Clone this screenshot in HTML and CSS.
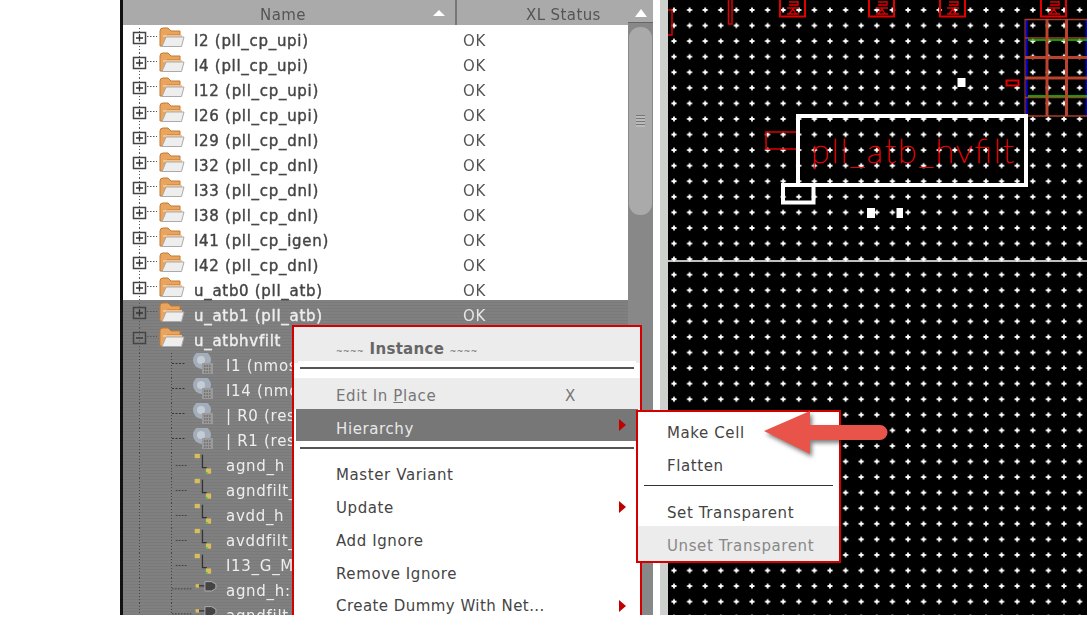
FILE: index.html
```html
<!DOCTYPE html>
<html lang="en">
<head>
    <meta charset="UTF-8">
    <title>Navigator - Make Cell</title>
    <link rel="stylesheet" href="styles.css">
</head>
<body>

<!-- shared tree icons -->
<svg class="defs" width="0" height="0">
    <symbol id="plus" viewBox="0 0 27 14">
        <rect x="1.5" y="1.5" width="12" height="11" fill="none" stroke="#444" stroke-width="1.5"/>
        <path d="M4 7h7M7.5 3.5v7" stroke="#333" stroke-width="1.3"/>
        <path d="M15 5.5h10" stroke="#555" stroke-dasharray="1.5 1.5"/>
    </symbol>
    <symbol id="minus" viewBox="0 0 27 14">
        <rect x="1.5" y="1.5" width="12" height="11" fill="none" stroke="#444" stroke-width="1.5"/>
        <path d="M4 7h7" stroke="#333" stroke-width="1.3"/>
        <path d="M15 5.5h10" stroke="#555" stroke-dasharray="1.5 1.5"/>
    </symbol>
    <symbol id="folder" viewBox="0 0 26 22">
        <path d="M1 5Q1 2 4 2H9L12 5H21V9H8L4 20H1Z" fill="#e9a45f" stroke="#c07a35"/>
        <path d="M4 9H23V11H4Z" fill="#f3c48e"/>
        <path d="M7 11H25L22.500 20.500H3Z" fill="#eeeeee" stroke="#aaa"/>
    </symbol>
    <symbol id="inst" viewBox="0 0 54 25">
        <path d="M0 10.500h14" stroke="#333" stroke-dasharray="2 1.500"/>
        <circle cx="30" cy="7" r="9" fill="#a4aebb"/>
        <circle cx="29" cy="7" r="4" fill="#c4ccd6"/>
        <rect x="30" y="10" width="11" height="11" fill="#9a9a9a"/>
        <path d="M32 13h7M32 16h7M32 19h7" stroke="#555" stroke-dasharray="1.500 1"/>
    </symbol>
    <symbol id="net" viewBox="0 -4 54 29">
        <path d="M0 10.500h14" stroke="#333" stroke-dasharray="2 1.500"/>
        <path d="M31 -2V13H36" fill="none" stroke="#333" stroke-width="1.500"/>
        <rect x="22" y="-3" width="6" height="5" fill="#d9bf5c"/>
        <rect x="35" y="14" width="6" height="6" fill="#d9bf5c"/>
        <rect x="35" y="18" width="2" height="2" fill="#3fc43f"/>
    </symbol>
    <symbol id="gate" viewBox="-10 0 64 25">
        <path d="M-10 10.500h24" stroke="#333" stroke-dasharray="2 1.500"/>
        <rect x="18" y="5" width="4" height="4" fill="#d9bf5c"/>
        <path d="M22 7h7" stroke="#333" stroke-width="1.500"/>
        <path d="M29 2h8l5 3v5l-5 3h-8Z" fill="#444" stroke="#bbb"/>
    </symbol>
</svg>

<div class="stage">
    <section class="tree-panel">
        <div class="tree-head">
            <div class="col-name">Name<span class="sort-up"></span></div>
            <div class="col-status">XL Status</div>
        </div>
        <div class="tree-list">
            <div class="row"><svg class="exp"><use href="#plus"/></svg><svg class="fold"><use href="#folder"/></svg><span class="name">I2 (pll_cp_upi)</span><span class="status">OK</span></div>
            <div class="row"><svg class="exp"><use href="#plus"/></svg><svg class="fold"><use href="#folder"/></svg><span class="name">I4 (pll_cp_upi)</span><span class="status">OK</span></div>
            <div class="row"><svg class="exp"><use href="#plus"/></svg><svg class="fold"><use href="#folder"/></svg><span class="name">I12 (pll_cp_upi)</span><span class="status">OK</span></div>
            <div class="row"><svg class="exp"><use href="#plus"/></svg><svg class="fold"><use href="#folder"/></svg><span class="name">I26 (pll_cp_upi)</span><span class="status">OK</span></div>
            <div class="row"><svg class="exp"><use href="#plus"/></svg><svg class="fold"><use href="#folder"/></svg><span class="name">I29 (pll_cp_dnl)</span><span class="status">OK</span></div>
            <div class="row"><svg class="exp"><use href="#plus"/></svg><svg class="fold"><use href="#folder"/></svg><span class="name">I32 (pll_cp_dnl)</span><span class="status">OK</span></div>
            <div class="row"><svg class="exp"><use href="#plus"/></svg><svg class="fold"><use href="#folder"/></svg><span class="name">I33 (pll_cp_dnl)</span><span class="status">OK</span></div>
            <div class="row"><svg class="exp"><use href="#plus"/></svg><svg class="fold"><use href="#folder"/></svg><span class="name">I38 (pll_cp_dnl)</span><span class="status">OK</span></div>
            <div class="row"><svg class="exp"><use href="#plus"/></svg><svg class="fold"><use href="#folder"/></svg><span class="name">I41 (pll_cp_igen)</span><span class="status">OK</span></div>
            <div class="row"><svg class="exp"><use href="#plus"/></svg><svg class="fold"><use href="#folder"/></svg><span class="name">I42 (pll_cp_dnl)</span><span class="status">OK</span></div>
            <div class="row"><svg class="exp"><use href="#plus"/></svg><svg class="fold"><use href="#folder"/></svg><span class="name">u_atb0 (pll_atb)</span><span class="status">OK</span></div>

            <div class="selection">
                <div class="row"><svg class="exp"><use href="#plus"/></svg><svg class="fold"><use href="#folder"/></svg><span class="name">u_atb1 (pll_atb)</span><span class="status">OK</span></div>
                <div class="row"><svg class="exp"><use href="#minus"/></svg><svg class="fold"><use href="#folder"/></svg><span class="name">u_atbhvfilt</span></div>
                <div class="row child"><svg class="kid"><use href="#inst"/></svg><span class="leaf">I1 (nmos</span></div>
                <div class="row child"><svg class="kid"><use href="#inst"/></svg><span class="leaf">I14 (nmos</span></div>
                <div class="row child"><svg class="kid"><use href="#inst"/></svg><span class="leaf">| R0 (resn</span></div>
                <div class="row child"><svg class="kid"><use href="#inst"/></svg><span class="leaf">| R1 (resn</span></div>
                <div class="row child"><svg class="kid"><use href="#net"/></svg><span class="leaf">agnd_h</span></div>
                <div class="row child"><svg class="kid"><use href="#net"/></svg><span class="leaf">agndfilt_</span></div>
                <div class="row child"><svg class="kid"><use href="#net"/></svg><span class="leaf">avdd_h</span></div>
                <div class="row child"><svg class="kid"><use href="#net"/></svg><span class="leaf">avddfilt_</span></div>
                <div class="row child"><svg class="kid"><use href="#net"/></svg><span class="leaf">I13_G_M</span></div>
                <div class="row child"><svg class="kid"><use href="#gate"/></svg><span class="leaf">agnd_h:i</span></div>
                <div class="row child"><svg class="kid"><use href="#gate"/></svg><span class="leaf">agndfilt_</span></div>
            </div>
        </div>
    </section>

    <div class="scrollbar">
        <div class="scroll-up"><span class="tri"></span></div>
        <div class="thumb"><span class="grip"></span></div>
    </div>
    <div class="gutter"></div>

    <!-- layout canvas, coords are page coords -->
    <svg class="canvas" viewBox="668 0 419 615">
        <defs>
            <pattern id="dots" patternUnits="userSpaceOnUse" x="666.2" y="2.2" width="15.6" height="15.57">
                <path d="M5.300 7.800h5M7.800 5.300v5" stroke="#fff" stroke-width="1.800"/>
            </pattern>
            <g id="pin">
                <rect x="0" y="-4" width="25" height="20.500" fill="none" stroke="#e00000" stroke-width="2"/>
                <path d="M9 2h9M9 5h9V1M7 8h12M9 14l4-5 3 5M7 14h12" fill="none" stroke="#e00000" stroke-width="1.300"/>
            </g>
        </defs>
        <rect x="668" width="419" height="615" fill="#000"/>
        <rect x="668" width="419" height="615" fill="url(#dots)"/>
        <path d="M668 261h419" stroke="#fff" stroke-width="1.500"/>

        <path d="M668 10h4v25h-4" fill="none" stroke="#e00000" stroke-width="1.500"/>
        <rect x="728.500" y="-2" width="3.500" height="26" fill="none" stroke="#e00000" stroke-width="1.500"/>
        <use href="#pin" x="780"/>
        <use href="#pin" x="869"/>
        <use href="#pin" x="940"/>
        <use href="#pin" x="1041"/>

        <!-- guard ring -->
        <g fill="none">
            <path d="M1026.500 19V116M1086.500 19V116" stroke="#0000f0" stroke-width="2"/>
            <path d="M1025 19.500h62M1025 38h62M1025 116h62M1025 97.500h62" stroke="#a83c28" stroke-width="1.500"/>
            <path d="M1028 40h59M1028 96h59" stroke="#10d010" stroke-width="1.500"/>
            <path d="M1025 57.500h62M1025 78h62M1047 19V116M1066.500 19V116" stroke="#b8442e" stroke-width="3"/>
            <path d="M1025 19V116" stroke="#a83c28"/>
        </g>

        <rect x="957.500" y="78" width="8" height="9" fill="#fff"/>
        <rect x="1006.500" y="80.500" width="12" height="5" fill="none" stroke="#e00000" stroke-width="2"/>
        <rect x="766" y="132" width="31" height="17" fill="none" stroke="#e00000" stroke-width="1.500"/>

        <rect x="798" y="116" width="228" height="69" fill="none" stroke="#fff" stroke-width="4"/>
        <rect x="783" y="185" width="30.500" height="17.500" fill="none" stroke="#fff" stroke-width="4"/>
        <text class="cell-label" x="811" y="163" textLength="203">pll_atb_hvfilt</text>

        <rect x="867" y="208" width="8" height="10" fill="#fff"/>
        <rect x="896.500" y="208" width="6.500" height="10" fill="#fff"/>
    </svg>

    <!-- context menu -->
    <div class="menu main-menu">
        <div class="menu-title"><span class="tilde">~~~~</span> Instance <span class="tilde">~~~~</span></div>
        <div class="menu-sep sep-top"></div>
        <div class="item dim-bg">Edit In <u>P</u>lace<span class="key">X</span></div>
        <div class="item active">Hierarchy<span class="more"></span></div>
        <div class="menu-sep sep-mid"></div>
        <div class="item">Master Variant</div>
        <div class="item">Update<span class="more"></span></div>
        <div class="item">Add Ignore</div>
        <div class="item">Remove Ignore</div>
        <div class="item last">Create Dummy With Net...<span class="more"></span></div>
    </div>

    <div class="menu sub-menu">
        <div class="sub-item">Make Cell</div>
        <div class="sub-item">Flatten</div>
        <div class="menu-sep sep-sub"></div>
        <div class="sub-item short">Set Transparent</div>
        <div class="sub-item disabled">Unset Transparent</div>
    </div>

    <svg class="callout" viewBox="0 0 135 50">
        <path d="M2 22L48 2V16H118A7.500 7.500 0 0 1 118 31H48V45Z" fill="#e8534a"/>
    </svg>
</div>

</body>
</html>
```

FILE: styles.css
```css
body {
    margin: 0;
    background-color: #fff;
    font-family: "DejaVu Sans", sans-serif;
    font-size: 15px;
    letter-spacing: 0.6px;
    color: #444;
}

.defs {
    position: absolute;
}

.stage {
    position: relative;
    display: flex;
    width: 967px;
    height: 615px;
    margin-left: 120px;
    overflow: hidden;
}

/* tree */
.tree-panel {
    width: 505px;
    border-left: 3px solid #111;
    background-color: #fff;
    filter: blur(0.3px);
}

.tree-head {
    display: flex;
    height: 25px;
    background-color: #aaa;
    color: #555;
    line-height: 31px;
    letter-spacing: 0.4px;
}

.col-name {
    position: relative;
    width: 320px;
    padding-right: 12px;
    border-right: 2px solid #777;
    text-align: center;
}

.sort-up {
    position: absolute;
    right: 10px;
    top: 10px;
    border: 6px solid transparent;
    border-top: 0;
    border-bottom-color: #fff;
}

.col-status {
    padding-left: 69px;
}

.tree-list {
    padding-top: 3px;
}

.row {
    display: flex;
    align-items: center;
    height: 25px;
    padding-left: 9px;
    background-image: linear-gradient(#555 50%, transparent 50%);
    background-size: 1px 3px;
    background-position: 16px 0;
    background-repeat: repeat-y;
    white-space: nowrap;
}

.exp {
    width: 27px;
    height: 14px;
    margin-top: -6px;
    flex: none;
}

.fold {
    width: 26px;
    height: 22px;
    margin: -7px 9px 0 0;
    flex: none;
}

.name {
    width: 269px;
    letter-spacing: 0.7px;
    -webkit-text-stroke: 0.4px currentColor;
}

.status {
    color: #555;
}

.selection {
    margin-top: -3px;
    padding-top: 3px;
    background-color: #808080;
    background-image: repeating-linear-gradient(#808080 0 2px, #7a7a7a 2px 3px);
}

.selection .name,
.selection .leaf {
    color: #eee;
}

.selection .status {
    color: #e6e6e6;
}

.row.child {
    padding-left: 49px;
    background-image: linear-gradient(#444 50%, transparent 50%), linear-gradient(#444 50%, transparent 50%);
    background-size: 1px 3px, 1px 3px;
    background-position: 16px 0, 48px 0;
    background-repeat: repeat-y, repeat-y;
}

.kid {
    width: 54px;
    height: 25px;
    flex: none;
    overflow: visible;
}

.leaf {
    letter-spacing: 0.7px;
}

/* scrollbar + gutter */
.scrollbar {
    width: 25px;
    background-color: #888;
}

.scroll-up {
    display: flex;
    justify-content: center;
    padding-top: 9px;
    height: 13px;
    background-color: #aaa;
    border-bottom: 1px solid #666;
}

.tri {
    width: 0;
    height: 0;
    border: 6px solid transparent;
    border-top: 0;
    border-bottom: 8px solid #fff;
}

.thumb {
    display: flex;
    align-items: center;
    justify-content: center;
    height: 188px;
    margin: 4px 1px 0;
    background-color: #aaa;
    border-radius: 11px;
}

.grip {
    width: 9px;
    height: 12px;
    background-image: repeating-linear-gradient(#777 0 1px, #bbb 1px 3px);
}

.gutter {
    width: 15px;
    background: linear-gradient(90deg, #fff 0 7px, #cdd0cd 7px);
}

.canvas {
    width: 419px;
    height: 615px;
    flex: none;
}

.cell-label {
    fill: #f00000;
    stroke: #f00000;
    stroke-width: 0.7px;
    font-family: "Lato", sans-serif;
    font-weight: 100;
    font-size: 34px;
    letter-spacing: 0;
}

/* menus */
.menu {
    position: absolute;
    box-sizing: border-box;
    background-color: #fff;
    border: 2px solid #d40000;
}

.main-menu {
    left: 172px;
    top: 325px;
    width: 350px;
    height: 300px;
}

.menu-title {
    height: 30px;
    padding: 6px 0 0 42px;
    line-height: 32px;
    background-color: #ececec;
    font-weight: bold;
    letter-spacing: 0.3px;
    color: #666;
}

.tilde {
    font-size: 8px;
    font-weight: normal;
}

.menu-sep {
    border-top: 2px solid #555;
}

.sep-top {
    height: 9px;
    margin: 4px 6px 0;
    box-shadow: 0 -4px 0 2px #fff;
}

.sep-mid {
    height: 9px;
    margin: 6px 6px 0;
}

.sep-sub {
    height: 10px;
    margin: 3px 6px 0;
    border-top-width: 1px;
    border-top-color: #333;
}

.item {
    position: relative;
    height: 33px;
    margin: 0 2px;
    padding-left: 40px;
    line-height: 35px;
    color: #444;
}

.dim-bg {
    height: 31px;
    line-height: 36px;
    margin: 0;
    padding-left: 42px;
    background-color: #ececec;
    color: #777;
}

.key {
    position: absolute;
    left: 271px;
}

.active {
    height: 32px;
    line-height: 41px;
    background-color: #777;
    color: #e8e8e8;
}

.last {
    letter-spacing: 0.45px;
    line-height: 33px;
}

.more {
    position: absolute;
    right: 12px;
    top: 10px;
    border: 6px solid transparent;
    border-right: 0;
    border-left: 7px solid #c00000;
}

.sub-menu {
    left: 516px;
    top: 410px;
    width: 205px;
    height: 153px;
    padding-top: 4px;
}

.sub-item {
    height: 33px;
    padding-left: 29px;
    line-height: 35px;
    color: #444;
}

.sub-item.short {
    height: 27px;
    padding-top: 3px;
    line-height: 29px;
}

.sub-item.disabled {
    height: 32px;
    padding-top: 3px;
    line-height: 35px;
    background-color: #ececec;
    color: #888;
}

.callout {
    position: absolute;
    left: 642px;
    top: 409px;
    width: 135px;
    height: 50px;
    filter: drop-shadow(2px 3px 2px rgba(0, 0, 0, 0.5));
}
```
